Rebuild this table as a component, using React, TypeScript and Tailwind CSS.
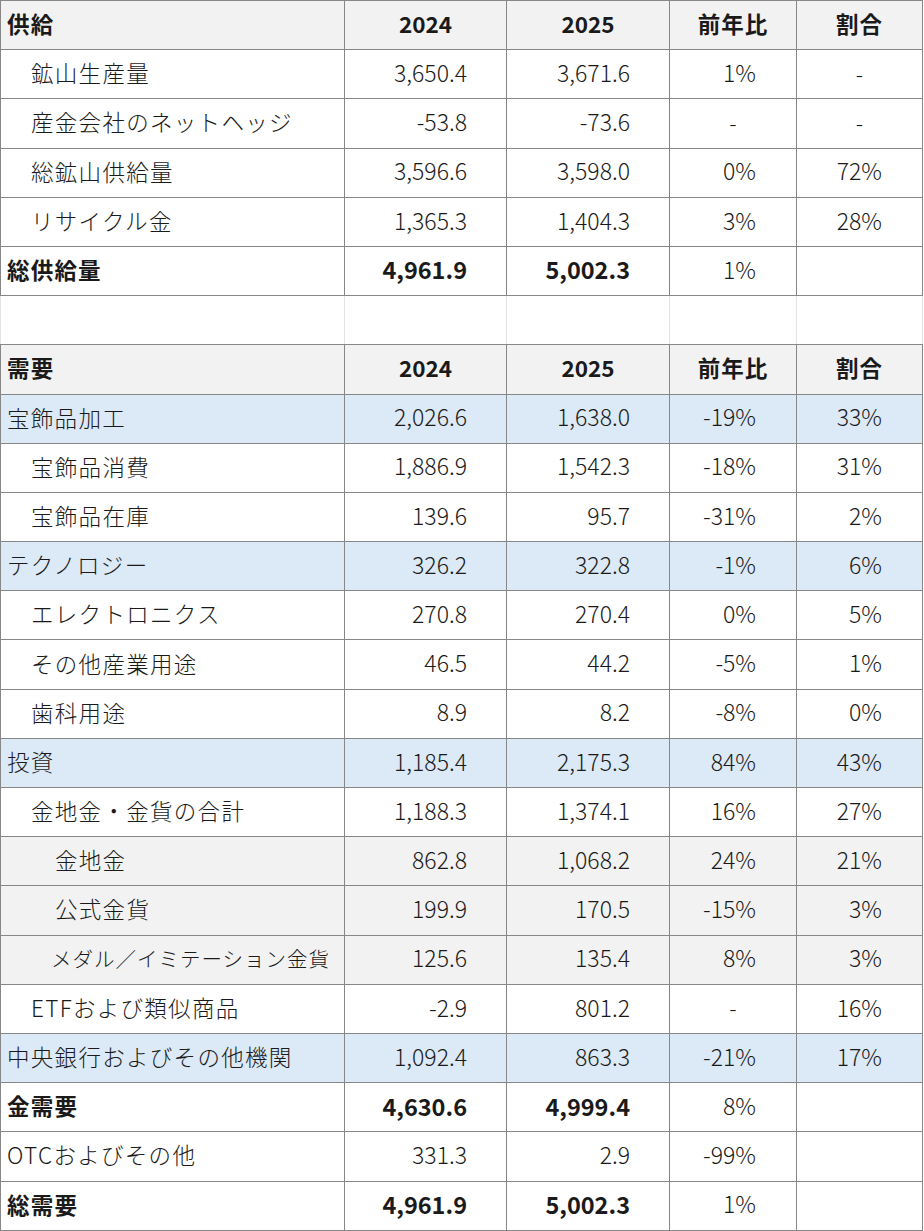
type Row =
  | { kind: 'header'; label: string }
  | { kind: 'blank' }
  | {
      kind: 'data'
      label: string
      indent?: 0 | 1 | 2
      bold?: boolean
      tone?: 'blue' | 'gray'
      small?: boolean
      v2024: string
      v2025: string
      yoy: string
      share: string
    }

const rows: Row[] = [
  { kind: 'header', label: '供給' },
  { kind: 'data', label: '鉱山生産量', indent: 1, v2024: '3,650.4', v2025: '3,671.6', yoy: '1%', share: '-' },
  { kind: 'data', label: '産金会社のネットヘッジ', indent: 1, v2024: '-53.8', v2025: '-73.6', yoy: '-', share: '-' },
  { kind: 'data', label: '総鉱山供給量', indent: 1, v2024: '3,596.6', v2025: '3,598.0', yoy: '0%', share: '72%' },
  { kind: 'data', label: 'リサイクル金', indent: 1, v2024: '1,365.3', v2025: '1,404.3', yoy: '3%', share: '28%' },
  { kind: 'data', label: '総供給量', bold: true, v2024: '4,961.9', v2025: '5,002.3', yoy: '1%', share: '' },
  { kind: 'blank' },
  { kind: 'header', label: '需要' },
  { kind: 'data', label: '宝飾品加工', tone: 'blue', v2024: '2,026.6', v2025: '1,638.0', yoy: '-19%', share: '33%' },
  { kind: 'data', label: '宝飾品消費', indent: 1, v2024: '1,886.9', v2025: '1,542.3', yoy: '-18%', share: '31%' },
  { kind: 'data', label: '宝飾品在庫', indent: 1, v2024: '139.6', v2025: '95.7', yoy: '-31%', share: '2%' },
  { kind: 'data', label: 'テクノロジー', tone: 'blue', v2024: '326.2', v2025: '322.8', yoy: '-1%', share: '6%' },
  { kind: 'data', label: 'エレクトロニクス', indent: 1, v2024: '270.8', v2025: '270.4', yoy: '0%', share: '5%' },
  { kind: 'data', label: 'その他産業用途', indent: 1, v2024: '46.5', v2025: '44.2', yoy: '-5%', share: '1%' },
  { kind: 'data', label: '歯科用途', indent: 1, v2024: '8.9', v2025: '8.2', yoy: '-8%', share: '0%' },
  { kind: 'data', label: '投資', tone: 'blue', v2024: '1,185.4', v2025: '2,175.3', yoy: '84%', share: '43%' },
  { kind: 'data', label: '金地金・金貨の合計', indent: 1, v2024: '1,188.3', v2025: '1,374.1', yoy: '16%', share: '27%' },
  { kind: 'data', label: '金地金', indent: 2, tone: 'gray', v2024: '862.8', v2025: '1,068.2', yoy: '24%', share: '21%' },
  { kind: 'data', label: '公式金貨', indent: 2, tone: 'gray', v2024: '199.9', v2025: '170.5', yoy: '-15%', share: '3%' },
  { kind: 'data', label: 'メダル／イミテーション金貨', indent: 2, tone: 'gray', small: true, v2024: '125.6', v2025: '135.4', yoy: '8%', share: '3%' },
  { kind: 'data', label: 'ETFおよび類似商品', indent: 1, v2024: '-2.9', v2025: '801.2', yoy: '-', share: '16%' },
  { kind: 'data', label: '中央銀行およびその他機関', tone: 'blue', v2024: '1,092.4', v2025: '863.3', yoy: '-21%', share: '17%' },
  { kind: 'data', label: '金需要', bold: true, v2024: '4,630.6', v2025: '4,999.4', yoy: '8%', share: '' },
  { kind: 'data', label: 'OTCおよびその他', v2024: '331.3', v2025: '2.9', yoy: '-99%', share: '' },
  { kind: 'data', label: '総需要', bold: true, v2024: '4,961.9', v2025: '5,002.3', yoy: '1%', share: '' },
]

const cell = 'h-[49.2px] p-0 pb-[3px] border border-[#878787] align-middle'

function NumCell({ value, bold, pct }: { value: string; bold?: boolean; pct?: boolean }) {
  if (value === '-') {
    return <td className={`${cell} text-center text-[22px] font-light`}>-</td>
  }
  return (
    <td
      className={`${cell} text-right ${pct ? 'pr-[40px]' : 'pr-[39px]'} ${
        bold ? 'text-[23.5px] font-bold' : 'text-[23px] font-light'
      }`}
    >
      {value}
    </td>
  )
}

export default function App() {
  return (
    <div className="bg-white w-[924px] text-[#1a1a1a]" style={{ fontFamily: '"Noto Sans CJK JP", "Noto Sans", sans-serif' }}>
      <table className="border-collapse table-fixed w-[923px] leading-[1.2]">
        <colgroup>
          <col className="w-[344px]" />
          <col className="w-[162px]" />
          <col className="w-[163px]" />
          <col className="w-[127px]" />
          <col className="w-[126px]" />
        </colgroup>
        <tbody>
          {rows.map((row, i) => {
            if (row.kind === 'blank') {
              return (
                <tr key={i}>
                  {[0, 1, 2, 3, 4].map(c => (
                    <td key={c} className="h-[49.2px] p-0 border border-x-[#e3e3e3] border-y-[#878787]" />
                  ))}
                </tr>
              )
            }
            if (row.kind === 'header') {
              return (
                <tr key={i} className="bg-[#f2f2f2] font-bold text-[22.5px]">
                  <td className={`${cell} pl-[6px] tracking-[1.2px]`}>{row.label}</td>
                  <td className={`${cell} text-center`}>2024</td>
                  <td className={`${cell} text-center`}>2025</td>
                  <td className={`${cell} text-center tracking-[1px]`}>前年比</td>
                  <td className={`${cell} text-center tracking-[1px]`}>割合</td>
                </tr>
              )
            }
            const bg = row.tone === 'blue' ? 'bg-[#dce9f7]' : row.tone === 'gray' ? 'bg-[#f2f2f2]' : 'bg-white'
            const pad = row.small ? 'pl-[50px]' : row.indent === 2 ? 'pl-[54px]' : row.indent === 1 ? 'pl-[30px]' : 'pl-[6px]'
            const font = row.small
              ? 'text-[20.5px] tracking-[1px] font-light'
              : row.bold
                ? 'text-[22.5px] font-bold tracking-[1.2px]'
                : 'text-[22.5px] tracking-[1.3px] font-light'
            return (
              <tr key={i} className={bg}>
                <td className={`${cell} ${pad} ${font} whitespace-nowrap`}>{row.label}</td>
                <NumCell value={row.v2024} bold={row.bold} />
                <NumCell value={row.v2025} bold={row.bold} />
                <NumCell value={row.yoy} pct />
                <NumCell value={row.share} pct />
              </tr>
            )
          })}
        </tbody>
      </table>
    </div>
  )
}
